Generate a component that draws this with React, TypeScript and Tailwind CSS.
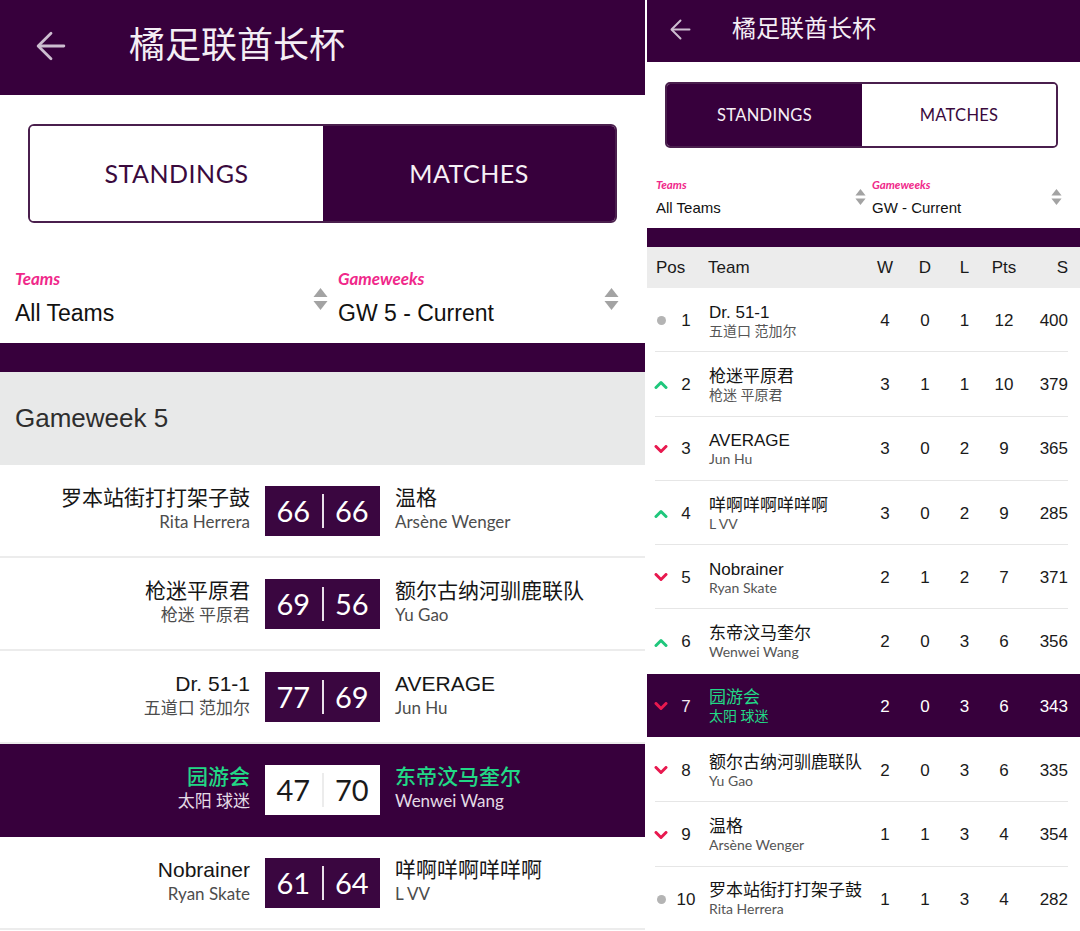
import clsx from "clsx";

const CJK = "font-['Liberation_Sans','Noto_Sans_CJK_SC',sans-serif]";
const GEO = "font-['Lato','Noto_Sans_CJK_SC',sans-serif]";

const matches = [
  { home: "罗本站街打打架子鼓", homeMgr: "Rita Herrera", hs: 66, as: 66, away: "温格", awayMgr: "Arsène Wenger" },
  { home: "枪迷平原君", homeMgr: "枪迷 平原君", hs: 69, as: 56, away: "额尔古纳河驯鹿联队", awayMgr: "Yu Gao" },
  { home: "Dr. 51-1", homeMgr: "五道口 范加尔", hs: 77, as: 69, away: "AVERAGE", awayMgr: "Jun Hu" },
  { home: "园游会", homeMgr: "太阳 球迷", hs: 47, as: 70, away: "东帝汶马奎尔", awayMgr: "Wenwei Wang", hl: true },
  { home: "Nobrainer", homeMgr: "Ryan Skate", hs: 61, as: 64, away: "咩啊咩啊咩咩啊", awayMgr: "L VV" },
];

type Move = "up" | "down" | "same";

const table: { pos: number; move: Move; team: string; mgr: string; w: number; d: number; l: number; pts: number; s: number; hl?: boolean }[] = [
  { pos: 1, move: "same", team: "Dr. 51-1", mgr: "五道口 范加尔", w: 4, d: 0, l: 1, pts: 12, s: 400 },
  { pos: 2, move: "up", team: "枪迷平原君", mgr: "枪迷 平原君", w: 3, d: 1, l: 1, pts: 10, s: 379 },
  { pos: 3, move: "down", team: "AVERAGE", mgr: "Jun Hu", w: 3, d: 0, l: 2, pts: 9, s: 365 },
  { pos: 4, move: "up", team: "咩啊咩啊咩咩啊", mgr: "L VV", w: 3, d: 0, l: 2, pts: 9, s: 285 },
  { pos: 5, move: "down", team: "Nobrainer", mgr: "Ryan Skate", w: 2, d: 1, l: 2, pts: 7, s: 371 },
  { pos: 6, move: "up", team: "东帝汶马奎尔", mgr: "Wenwei Wang", w: 2, d: 0, l: 3, pts: 6, s: 356 },
  { pos: 7, move: "down", team: "园游会", mgr: "太阳 球迷", w: 2, d: 0, l: 3, pts: 6, s: 343, hl: true },
  { pos: 8, move: "down", team: "额尔古纳河驯鹿联队", mgr: "Yu Gao", w: 2, d: 0, l: 3, pts: 6, s: 335 },
  { pos: 9, move: "down", team: "温格", mgr: "Arsène Wenger", w: 1, d: 1, l: 3, pts: 4, s: 354 },
  { pos: 10, move: "same", team: "罗本站街打打架子鼓", mgr: "Rita Herrera", w: 1, d: 1, l: 3, pts: 4, s: 282 },
];

function BackArrow({ size }: { size: number }) {
  return (
    <svg width={size} height={size} viewBox="0 0 28 28" fill="none" stroke="#cdbdd0" strokeWidth="2.6" strokeLinecap="round" strokeLinejoin="round">
      <path d="M26 14H3" />
      <path d="M14 2L2 14l12 12" />
    </svg>
  );
}

function SortIcon({ w, h }: { w: number; h: number }) {
  return (
    <svg width={w} height={h} viewBox="0 0 14 22" fill="#a3a3a3">
      <path d="M7 0L14 9H0z" />
      <path d="M7 22L14 13H0z" />
    </svg>
  );
}

function MoveIcon({ move }: { move: Move }) {
  if (move === "same") return <span className="block h-[9px] w-[9px] rounded-full bg-[#b4b4b4]" />;
  const up = move === "up";
  return (
    <svg width="14" height="9" viewBox="0 0 14 9" fill="none" stroke={up ? "#1fc77c" : "#e8194f"} strokeWidth="3" strokeLinecap="round" strokeLinejoin="round">
      <path d={up ? "M2 7.5L7 2.5l5 5" : "M2 1.5L7 6.5l5-5"} />
    </svg>
  );
}

function Filters({ big }: { big: boolean }) {
  const label = big ? "text-[17px] leading-[22px]" : "text-[11.5px] leading-[15px]";
  const value = big ? "text-[23px] leading-[28px]" : "text-[15px] leading-[20px]";
  const cols = [
    { l: "Teams", v: "All Teams" },
    { l: "Gameweeks", v: big ? "GW 5 - Current" : "GW - Current" },
  ];
  return (
    <div className={clsx("flex", big ? "h-[120px] pt-[45px] pl-[15px]" : "h-[80px] pt-[29px] pl-[9px]")}>
      {cols.map((c, i) => (
        <div key={c.l} className={clsx("flex", big ? (i === 0 ? "w-[323px]" : "flex-1 pr-[16px]") : i === 0 ? "w-[216px]" : "flex-1 pr-[12px]")}>
          <div className="flex-1">
            <div className={clsx(GEO, "font-bold italic text-[#f0288a]", label)}>{c.l}</div>
            <div className={clsx(CJK, "text-[#111]", value, big ? "mt-[9px]" : "mt-[6px]")}>{c.v}</div>
          </div>
          <div className={clsx(big ? "pt-[20px] pr-[10px]" : "pt-[12px] pr-[6px]")}>
            {big ? <SortIcon w={15} h={22} /> : <SortIcon w={11} h={16} />}
          </div>
        </div>
      ))}
    </div>
  );
}

function MatchRow({ m }: { m: (typeof matches)[number] }) {
  const hl = !!m.hl;
  const team = clsx(CJK, "text-[21px] leading-[26px]", hl ? "font-medium text-[#22d886]" : "text-[#161616]");
  const mgr = clsx(GEO, "text-[17px] leading-[22px]", hl ? "text-[#e4dbe6]" : "text-[#4d4d4d]");
  return (
    <div className={clsx("flex h-[93px] items-center border-b-2 pb-[3px]", hl ? "border-[#37003c] bg-[#37003c]" : "border-[#ececec] bg-white")}>
      <div className="w-[250px] text-right">
        <div className={team}>{m.home}</div>
        <div className={mgr}>{m.homeMgr}</div>
      </div>
      <div className={clsx("ml-[15px] mt-[3px] flex h-[50px] w-[115px] items-center", GEO, "text-[29px]", hl ? "bg-white text-[#1a1a1a]" : "bg-[#3a0640] text-white")}>
        <span className="flex-1 text-center">{m.hs}</span>
        <span className={clsx("h-[34px] w-[2px]", hl ? "bg-[#ececec]" : "bg-[#e9dfea]")} />
        <span className="flex-1 text-center">{m.as}</span>
      </div>
      <div className="ml-[15px]">
        <div className={team}>{m.away}</div>
        <div className={mgr}>{m.awayMgr}</div>
      </div>
    </div>
  );
}

function MatchesPanel() {
  return (
    <div className="flex w-[645px] flex-col bg-white">
      <div className="flex h-[95px] items-center bg-[#37003c] pb-[3px]">
        <div className="ml-[36px]">
          <BackArrow size={30} />
        </div>
        <div className={clsx(CJK, "ml-[63px] text-[36px] text-[#f4eef5]")}>橘足联酋长杯</div>
      </div>
      <div className="px-[28px] pt-[29px]">
        <div className={clsx(GEO, "flex h-[99px] overflow-hidden rounded-[6px] border-2 border-[#4a1f4d] text-[25px] tracking-[0.5px]")}>
          <div className="flex w-[293px] items-center justify-center bg-white text-[#3a0a3d]">STANDINGS</div>
          <div className="flex flex-1 items-center justify-center bg-[#37003c] text-[#f6f0f6]">MATCHES</div>
        </div>
      </div>
      <Filters big />
      <div className="h-[29px] bg-[#37003c]" />
      <div className={clsx(CJK, "flex h-[93px] items-center bg-[#e8e9e9] pl-[15px] text-[26px] text-[#2e2e2e]")}>Gameweek 5</div>
      {matches.map((m, i) => (
        <MatchRow key={i} m={m} />
      ))}
    </div>
  );
}

function StandingsPanel() {
  const num = clsx(CJK, "text-[17px]");
  return (
    <div className="ml-[2px] flex w-[433px] flex-col bg-white">
      <div className="flex h-[62px] items-center bg-[#37003c] pb-[4px]">
        <div className="ml-[23px]">
          <BackArrow size={21} />
        </div>
        <div className={clsx(CJK, "ml-[41px] text-[24px] text-[#f4eef5]")}>橘足联酋长杯</div>
      </div>
      <div className="pl-[18px] pr-[22px] pt-[20px]">
        <div className={clsx(GEO, "flex h-[66px] overflow-hidden rounded-[5px] border-2 border-[#4a1f4d] text-[16.5px] tracking-[0.3px]")}>
          <div className="flex w-[195px] items-center justify-center bg-[#37003c] text-[#f6f0f6]">STANDINGS</div>
          <div className="flex flex-1 items-center justify-center bg-white text-[#3a0a3d]">MATCHES</div>
        </div>
      </div>
      <Filters big={false} />
      <div className="h-[19px] bg-[#37003c]" />
      <div className={clsx(CJK, "flex h-[41px] items-center bg-[#ececec] text-[17px] text-[#1a1a1a]")}>
        <div className="w-[61px] pl-[9px]">Pos</div>
        <div className="w-[157px]">Team</div>
        <div className="w-[40px] text-center">W</div>
        <div className="w-[40px] text-center">D</div>
        <div className="w-[39px] text-center">L</div>
        <div className="w-[40px] text-center">Pts</div>
        <div className="w-[44px] text-right">S</div>
      </div>
      {table.map((r, i) => (
        <div key={r.pos}>
          {i > 0 && <div className={clsx("h-px", table[i - 1].hl || r.hl ? "bg-transparent" : "ml-[8px] mr-[12px] bg-[#e6e6e6]")} />}
          <div className={clsx("flex h-[63.3px] items-center pt-[2px]", r.hl ? "bg-[#37003c] text-white" : "text-[#1a1a1a]")}>
            <div className="flex w-[28px] justify-center">
              <MoveIcon move={r.move} />
            </div>
            <div className={clsx(num, "w-[22px] text-center", r.hl ? "text-[#f0e8f0]" : "")}>{r.pos}</div>
            <div className="w-[168px] pl-[12px]">
              <div className={clsx(CJK, "text-[17px] leading-[19px]", r.hl ? "text-[#22d886]" : "text-[#141414]")}>{r.team}</div>
              <div className={clsx(GEO, "text-[14px] leading-[17px]", r.hl ? "text-[#22d886]" : "text-[#555]")}>{r.mgr}</div>
            </div>
            <div className={clsx(num, "w-[40px] text-center")}>{r.w}</div>
            <div className={clsx(num, "w-[40px] text-center")}>{r.d}</div>
            <div className={clsx(num, "w-[39px] text-center")}>{r.l}</div>
            <div className={clsx(num, "w-[40px] text-center")}>{r.pts}</div>
            <div className={clsx(num, "w-[44px] text-right")}>{r.s}</div>
          </div>
        </div>
      ))}
    </div>
  );
}

export default function App() {
  return (
    <div className="flex h-[931px] w-[1080px] overflow-hidden bg-white">
      <MatchesPanel />
      <StandingsPanel />
    </div>
  );
}
